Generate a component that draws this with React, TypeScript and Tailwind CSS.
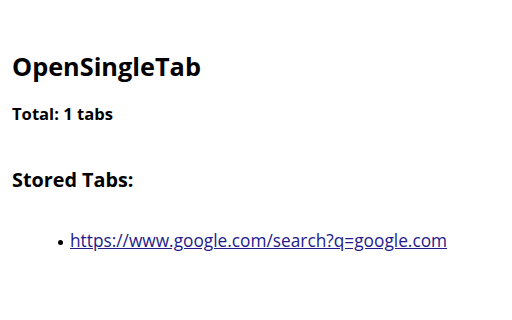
const App = () => {
  return (
    <div className="w-[512px] h-[320px] bg-white text-black px-3 pt-[50px]" style={{ fontFamily: '"Open Sans", sans-serif' }}>
      <h1 className="text-[25.3px] font-bold leading-[32px]">OpenSingleTab</h1>
      <p className="mt-[20px] text-[16.6px] font-bold leading-[24px]">Total: 1 tabs</p>
      <h2 className="mt-[40px] text-[19.8px] font-bold leading-[28px]">Stored Tabs:</h2>
      <ul className="mt-[35px] pl-[46px]">
        <li className="flex items-center gap-[7px] text-[17.3px] leading-[24px]">
          <span className="mt-[2px] w-[5px] h-[5px] rounded-full bg-black" />
          <a href="#" className="text-[#241a8a] underline">
            https://www.google.com/search?q=google.com
          </a>
        </li>
      </ul>
    </div>
  );
};

export default App;
